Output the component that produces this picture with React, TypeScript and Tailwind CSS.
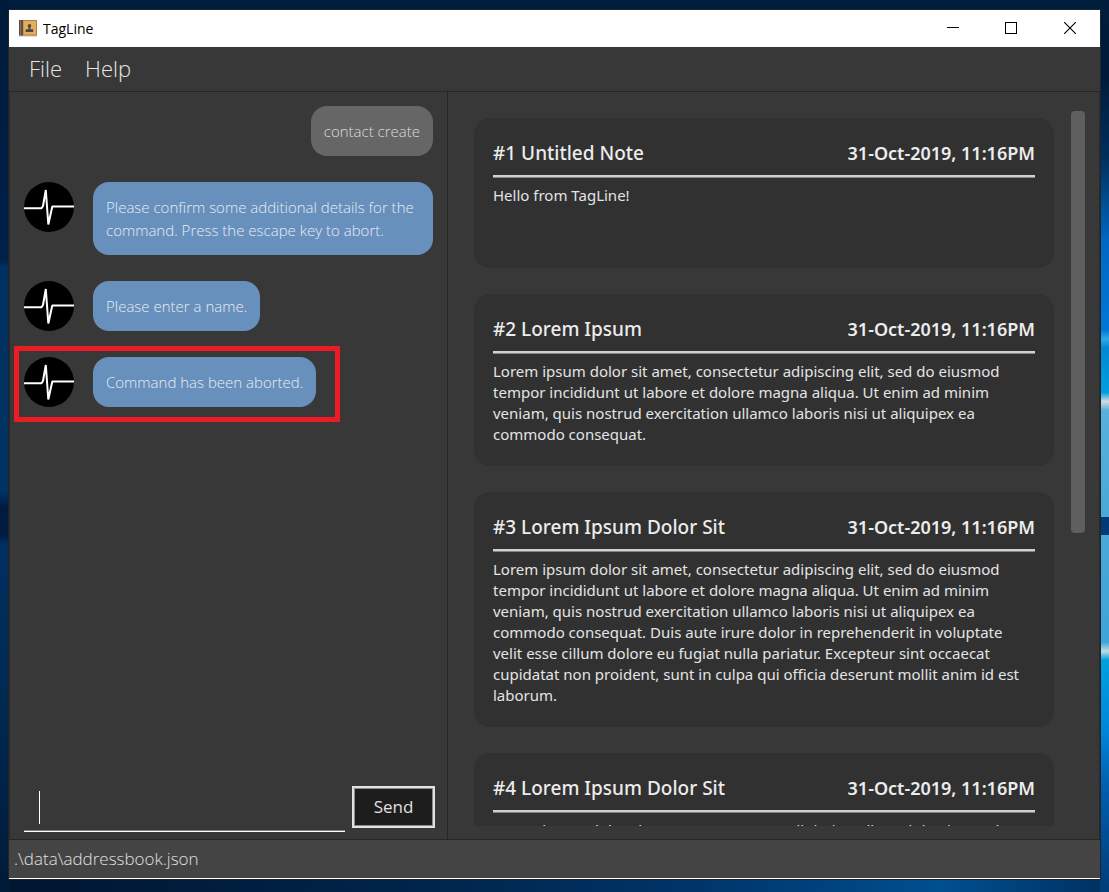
type Message = { from: 'user' | 'bot'; text: string; highlighted?: boolean };
type Note = { id: number; title: string; date: string; body: string };

const messages: Message[] = [
  { from: 'user', text: 'contact create' },
  {
    from: 'bot',
    text: 'Please confirm some additional details for the command. Press the escape key to abort.',
  },
  { from: 'bot', text: 'Please enter a name.' },
  { from: 'bot', text: 'Command has been aborted.', highlighted: true },
];

const intro =
  'Lorem ipsum dolor sit amet, consectetur adipiscing elit, sed do eiusmod tempor incididunt ut labore et dolore magna aliqua. Ut enim ad minim veniam, quis nostrud exercitation ullamco laboris nisi ut aliquipex ea commodo consequat.';

const full = `${intro} Duis aute irure dolor in reprehenderit in voluptate velit esse cillum dolore eu fugiat nulla pariatur. Excepteur sint occaecat cupidatat non proident, sunt in culpa qui officia deserunt mollit anim id est laborum.`;

const notes: Note[] = [
  { id: 1, title: 'Untitled Note', date: '31-Oct-2019, 11:16PM', body: 'Hello from TagLine!' },
  { id: 2, title: 'Lorem Ipsum', date: '31-Oct-2019, 11:16PM', body: intro },
  { id: 3, title: 'Lorem Ipsum Dolor Sit', date: '31-Oct-2019, 11:16PM', body: full },
  { id: 4, title: 'Lorem Ipsum Dolor Sit', date: '31-Oct-2019, 11:16PM', body: full },
];

function AppIcon() {
  return (
    <svg width="18" height="17" viewBox="0 0 18 17" aria-hidden="true">
      <rect x="0" y="15" width="18" height="1.5" fill="#8a8078" opacity="0.5" />
      <rect x="0" y="0" width="4" height="15.5" fill="#5f4c46" />
      <rect x="1" y="0.5" width="1" height="14.5" fill="#85706a" />
      <rect x="4" y="0" width="14" height="15.5" fill="#b8803a" />
      <rect x="4.5" y="1" width="12.5" height="13.5" fill="#dfae60" />
      <path
        d="M10.5 4C11.7 4 12.2 4.8 12.2 5.8C12.2 6.7 11.8 7.3 11.4 7.8V9.2H14.2V12H6.6V9.2H9.5V7.8C9.1 7.3 8.8 6.7 8.8 5.8C8.8 4.8 9.3 4 10.5 4Z"
        fill="#54463c"
      />
    </svg>
  );
}

function Avatar() {
  return (
    <svg className="size-[50px] shrink-0" viewBox="0 0 50 50" role="img" aria-label="TagLine bot">
      <circle cx="25" cy="25" r="25" fill="#000" />
      <path
        d="M0 26.2H17.5L19 24L21.8 8L24.3 42.5L28.3 24.5H50"
        fill="none"
        stroke="#fff"
        strokeWidth="2"
        strokeLinejoin="bevel"
      />
    </svg>
  );
}

function MessageRow({ message }: { message: Message }) {
  if (message.from === 'user') {
    return (
      <li className="flex justify-end">
        <p className="rounded-2xl bg-[#666666] px-[13px] pt-[14px] pb-[13px] text-[15px] leading-[23px] font-light text-[#dcdcdc]">
          {message.text}
        </p>
      </li>
    );
  }
  return (
    <li className="relative flex w-fit max-w-full items-start gap-[19px]">
      <Avatar />
      <p className="rounded-2xl bg-[#6890bc] px-[13px] pt-[14px] pb-[13px] text-[15px] leading-[23px] font-light text-[#e6ecf3]">
        {message.text}
      </p>
      {message.highlighted && (
        <span className="pointer-events-none absolute -top-[11px] -right-[24px] -bottom-[15px] -left-[10px] border-5 border-[#ed1c24]" />
      )}
    </li>
  );
}

function NoteCard({ note }: { note: Note }) {
  return (
    <article className="min-h-[150px] shrink-0 rounded-2xl bg-[#313131] px-[19px] pt-5 pb-[21px] font-['Noto_Sans','Open_Sans',sans-serif]">
      <header className="flex items-center justify-between border-b-2 border-[#d0d0d0] pb-[7px] leading-[30px] text-[#ececec] shadow-[0_1px_0_#858585]">
        <h2 className="text-[19px] font-medium">
          #{note.id} {note.title}
        </h2>
        <time className="text-[18px] font-semibold">{note.date}</time>
      </header>
      <p className="pt-2 text-[15px] leading-[21px] text-[#e4e4e4]">{note.body}</p>
    </article>
  );
}

function TitleBar() {
  return (
    <header className="flex h-[37px] shrink-0 items-center bg-white pl-[10px] text-black">
      <AppIcon />
      <h1 className="ml-[6px] flex-1 text-sm">TagLine</h1>
      <button type="button" aria-label="Minimize" className="flex h-full w-[58px] items-center justify-center pb-px">
        <svg width="12" height="12" viewBox="0 0 12 12" aria-hidden="true">
          <path d="M0 5.5H12" stroke="#000" />
        </svg>
      </button>
      <button type="button" aria-label="Maximize" className="flex h-full w-[58px] items-center justify-center pb-px">
        <svg width="12" height="12" viewBox="0 0 12 12" aria-hidden="true">
          <rect x="0.5" y="0.5" width="11" height="11" fill="none" stroke="#000" />
        </svg>
      </button>
      <button type="button" aria-label="Close" className="flex h-full w-[60px] items-center justify-center pb-px">
        <svg width="12" height="12" viewBox="0 0 12 12" aria-hidden="true">
          <path d="M0 0L12 12M12 0L0 12" stroke="#000" strokeWidth="1.1" />
        </svg>
      </button>
    </header>
  );
}

export default function App() {
  return (
    <div className="h-screen px-[9px] pt-[10px] pb-[13px] font-['Open_Sans','Noto_Sans',sans-serif] [background:linear-gradient(#001c3c,#001a38_8%,#00305f_18%,#0068c4_27%,#0078d8_37%,#30a8e8_38%,#0088d4_39%,#009fe0_44%,#d0dce0_45%,#58b0dc_46%,#4aa9d8_58%,#003a78_58%,#003a78_60%,#48a8d8_60%,#3fa4d8_72%,#c0dce4_73%,#00a0e0_74%,#0086dc_82%,#0060b0_88%,#003c78)_right/9px_100%_no-repeat,linear-gradient(#001a38,#00204a_29%,#003060_30%,#003464_55%,#001a40_57%,#001a40_60%,#003060_61%,#002850_80%,#001a38)_left/9px_100%_no-repeat,linear-gradient(90deg,#001530,#00264c_40%,#003468_62%,#004f90_85%,#003060)_bottom/100%_13px_no-repeat,#001c3c]">
      <div className="flex h-full flex-col border-b border-white bg-[#383838] shadow-[0_0_0_1px_#1c2630]">
        <TitleBar />
        <nav className="flex h-[45px] shrink-0 items-center gap-[23px] border-b border-[#262626] px-5 pb-[2px] text-[22px] font-light text-[#e6e6e6]">
          <button type="button">File</button>
          <button type="button">Help</button>
        </nav>
        <main className="grid min-h-0 flex-1 grid-cols-[438fr_651fr] border-x border-[#2a2a2a]">
          <section className="flex min-h-0 min-w-0 flex-col border-r border-[#262626]" aria-label="Chat">
            <ul className="flex min-h-0 flex-1 flex-col gap-[26px] px-[14px] pt-[14px]">
              {messages.map((m, i) => (
                <MessageRow key={i} message={m} />
              ))}
            </ul>
            <form className="flex items-start gap-[7px] pr-3 pb-[7px] pl-[14px]" onSubmit={(e) => e.preventDefault()}>
              <div className="relative flex-1">
                <input
                  type="text"
                  aria-label="Command"
                  className="h-[46px] w-full border-b border-white bg-transparent px-[15px] text-[17px] text-white shadow-[inset_0_-1px_0_#808080] outline-none"
                />
                <span className="absolute top-[5px] left-[15px] h-[33px] w-px bg-white" />
              </div>
              <button
                type="submit"
                className="h-[42px] w-[83px] border-2 border-[#e2e2e2] bg-[#1d1d1d] text-[17px] text-[#e0e0e0] shadow-[inset_0_0_0_1px_#8a8a8a]"
              >
                Send
              </button>
            </form>
          </section>
          <section className="flex min-h-0 min-w-0 pt-[19px] pr-[14px] pb-[13px] pl-[26px]" aria-label="Notes">
            <div className="flex min-w-0 flex-1 flex-col gap-[26px] overflow-y-auto pt-[7px] [scrollbar-width:none]">
              {notes.map((n) => (
                <NoteCard key={n.id} note={n} />
              ))}
            </div>
            <div className="ml-[17px] w-[14px]">
              <div className="h-[59%] rounded-sm bg-[#5f5f5f]" />
            </div>
          </section>
        </main>
        <footer className="h-[39px] shrink-0 border-t border-[#262626] bg-[#444444] px-[5px] text-[17px] leading-[37px] font-light text-[#e0e0e0]">
          .\data\addressbook.json
        </footer>
      </div>
    </div>
  );
}
